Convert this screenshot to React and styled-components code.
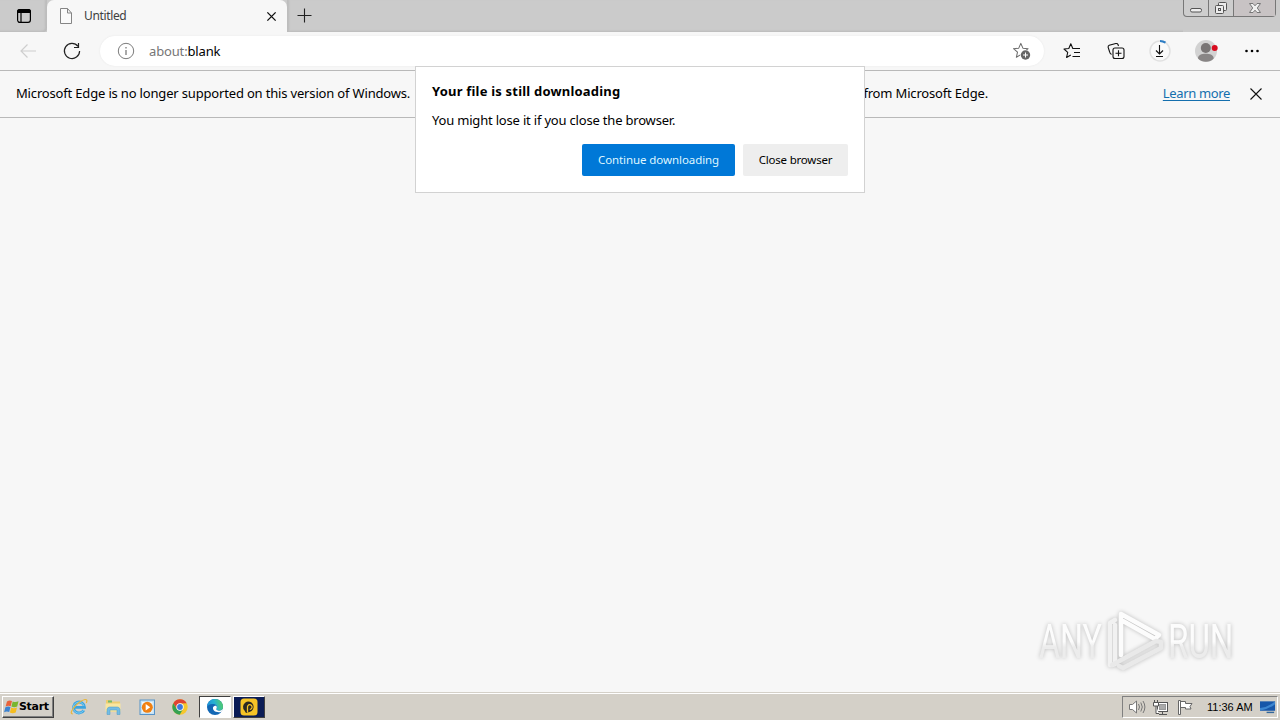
import React from "react";
import styled, { createGlobalStyle, css } from "styled-components";

const GlobalStyle = createGlobalStyle`
  * {
    box-sizing: border-box;
  }

  body {
    margin: 0;
    overflow: hidden;
    background: #f7f7f7;
  }

  svg {
    display: block;
    flex: none;
    overflow: visible;
  }
`;

const Screen = styled.div`
  display: flex;
  flex-direction: column;
  width: 1280px;
  height: 720px;
  overflow: hidden;
  background: #f7f7f7;
  font-family: "Noto Sans", "Open Sans", sans-serif;
  font-size: 13px;
  color: #000000;
`;

const Label = styled.span`
  white-space: nowrap;
  font-size: ${(p) => p.$size || 13}px;
  line-height: 18px;
  letter-spacing: ${(p) => p.$spacing || 0}px;
  color: ${(p) => p.$color || "inherit"};
`;

/* Tab strip */

const TabStrip = styled.div`
  display: flex;
  flex: none;
  height: 32px;
  background: #cbcbcb;
`;

const TabActions = styled.div`
  width: 47px;
  padding: 8px 0 0 16px;
  border-bottom-right-radius: 4px;
  box-shadow: inset -2px -1px 2px #bcbcbc;
`;

const Tab = styled.div`
  display: flex;
  width: 240px;
  padding: 0 11px 0 11px;
  align-items: center;
  border-radius: 7px 7px 0 0;
  background: #f7f7f7;
`;

const TabTitle = styled(Label)`
  flex: 1;
  padding-left: 10px;
`;

const NewTab = styled.div`
  flex: 1;
  padding: 8px 0 0 10px;
  box-shadow: inset 2px -1px 2px #bcbcbc;
`;

const WindowButtons = styled.div`
  display: flex;
  width: 93px;
  height: 17px;
  margin-right: 4px;
  border: 1px solid #777777;
  border-top: 0;
  border-radius: 0 0 4px 4px;
  background: #cdcdcd;
`;

const WindowButton = styled.div`
  display: flex;
  width: ${(p) => p.$width}px;
  align-items: center;
  justify-content: center;
  border-left: ${(p) => (p.$first ? "0" : "1px solid #777777")};
  background: ${(p) => (p.$close ? "#c8c3c4" : "transparent")};
`;

/* Toolbar */

const Toolbar = styled.div`
  display: flex;
  flex: none;
  height: 39px;
  padding-left: 19px;
  align-items: center;
  border-bottom: 1px solid #b9b9b9;
`;

const ToolbarItem = styled.div`
  display: flex;
  width: ${(p) => p.$width || 44}px;
  height: 38px;
  align-items: center;
  justify-content: center;
`;

const RefreshItem = styled(ToolbarItem)`
  margin-left: 13px;
`;

const AddressBar = styled.div`
  display: flex;
  width: 944px;
  height: 30px;
  margin: 0 6px;
  padding: 0 12px 0 17px;
  align-items: center;
  border-radius: 15px;
  background: #ffffff;
  box-shadow: 0 0 2px #e6e6e6;
`;

const Address = styled(Label)`
  flex: 1;
  padding-left: 14px;
`;

const Scheme = styled.span`
  color: #767676;
`;

/* Notification bar */

const InfoBar = styled.div`
  display: flex;
  flex: none;
  height: 47px;
  padding: 0 18px 2px 16px;
  align-items: center;
  border-bottom: 1px solid #b9b9b9;
`;

const InfoText = styled(Label)`
  width: 394px;
`;

const InfoTail = styled(Label)`
  width: 578px;
  text-align: right;
`;

const LearnMore = styled(Label)`
  margin-left: auto;
  margin-right: 20px;
  color: #146fae;
  text-decoration: underline;
  text-underline-offset: 2px;
`;

const DismissButton = styled.div`
  padding-top: 2px;
`;

const Content = styled.div`
  display: flex;
  flex: 1;
  align-items: flex-end;
  justify-content: flex-end;
  padding: 0 38px 14px 0;
`;

const WatermarkArt = styled.svg`
  filter: drop-shadow(0 0 2px rgba(0, 0, 0, 0.24));
`;

/* Dialog */

const Dialog = styled.div`
  position: absolute;
  left: 415px;
  top: 66px;
  display: flex;
  flex-direction: column;
  width: 450px;
  height: 127px;
  padding: 15px 16px;
  border: 1px solid #d2d2d2;
  background: #ffffff;
`;

const DialogTitle = styled(Label)`
  font-weight: 700;
  margin-bottom: 11px;
`;

const DialogButtons = styled.div`
  display: flex;
  justify-content: flex-end;
  gap: 8px;
  margin-top: 15px;
`;

const Button = styled.button`
  width: ${(p) => p.$width}px;
  height: 32px;
  padding: 0 0 1px;
  border: 0;
  border-radius: 2px;
  font-family: inherit;
  background: #eeeeee;
  color: #000000;

  ${(p) =>
    p.$primary &&
    css`
      background: #0078d7;
      color: #dff6ff;
    `}
`;

/* Taskbar */

const Taskbar = styled.div`
  display: flex;
  flex: none;
  height: 28px;
  padding: 2px 2px 1px;
  border-top: 1px solid #d4d0c8;
  background: #d4d0c8;
  box-shadow: inset 0 1px 0 #ffffff;
`;

const StartButton = styled.div`
  display: flex;
  width: 52px;
  height: 22px;
  margin: 1px 11px 0 0;
  padding-left: 1px;
  align-items: center;
  border: 1px solid;
  border-color: #ffffff #404040 #404040 #ffffff;
  box-shadow: inset -1px -1px 0 #808080;
  font-family: "DejaVu Sans", sans-serif;
  font-weight: 700;
`;

const TaskItem = styled.div`
  display: flex;
  width: ${(p) => p.$width || 34}px;
  height: 22px;
  margin-top: 1px;
  align-items: center;
  justify-content: center;

  ${(p) =>
    p.$active &&
    css`
      margin-right: 2px;
      border: 1px solid;
      border-color: #404040 #ffffff #ffffff #404040;
      background: #ffffff;
    `}

  ${(p) =>
    p.$dark &&
    css`
      border: 1px solid;
      border-color: #ffffff #404040 #404040 #ffffff;
      background: #0b1c55;
    `}
`;

const Tray = styled.div`
  display: flex;
  width: 156px;
  height: 22px;
  margin: 1px 0 0 auto;
  padding-left: 5px;
  align-items: center;
  gap: 7px;
  border: 1px solid;
  border-color: #808080 #ffffff #ffffff #808080;
  font-family: "Liberation Sans", sans-serif;
`;

const Clock = styled(Label)`
  margin-left: 6px;
  width: 46px;
`;

const TabActionsIcon = () => (
  <svg width="16" height="16" viewBox="0 0 16 16">
    <rect x="1.6" y="1.6" width="12.8" height="12.8" rx="2.3" fill="none" stroke="#000" strokeWidth="1.2" />
    <path d="M1 5V3.5Q1 1 3.5 1h9Q15 1 15 3.5V5Z" />
    <path d="M5 5v9.500" stroke="#000" strokeWidth="1.200" />
  </svg>
);

const PageIcon = () => (
  <svg width="16" height="18" viewBox="0 0 16 18" fill="#fafafa" stroke="#858585">
    <path d="M2.500 1.500h7l4 4.500v10.500h-11ZM9.500 1.500v4.500h4" />
  </svg>
);

const CloseIcon = ({ size, weight }) => (
  <svg width={size} height={size} viewBox="0 0 12 12" stroke="#111" strokeWidth={weight}>
    <path d="M.5.5l11 11M11.500.5l-11 11" />
  </svg>
);

const PlusIcon = () => (
  <svg width="16" height="16" viewBox="0 0 16 16" stroke="#222" strokeWidth="1.100">
    <path d="M7.500.5v14M.5 7.500h14" />
  </svg>
);

const BackIcon = () => (
  <svg width="18" height="16" viewBox="0 0 18 16" fill="none" stroke="#cecece" strokeWidth="1.200">
    <path d="M17 8H2M8.500 1.500L2 8l6.500 6.500" />
  </svg>
);

const RefreshIcon = () => (
  <svg width="18" height="18" viewBox="0 0 18 18" fill="none" stroke="#222" strokeWidth="1.200">
    <path d="M15 4.300A7.600 7.600 0 1 0 16.600 9M15.500 1v4.500H11" />
  </svg>
);

const InfoIcon = () => (
  <svg width="18" height="18" viewBox="0 0 18 18" fill="none" stroke="#7c7c7c">
    <circle cx="9" cy="9" r="7.700" />
    <path d="M9 8v5M9 5v1.500" strokeWidth="1.300" />
  </svg>
);

const STAR = "M8 1.500l2 4.600 5 .5-3.800 3.300 1.100 5L8 12.300l-4.300 2.600 1.100-5L1 6.600l5-.5Z";

const AddFavoriteIcon = () => (
  <svg width="20" height="20" viewBox="0 0 20 20">
    <path d={STAR} transform="translate(.5 .8) scale(1.040)" fill="none" stroke="#6b6b6b" strokeLinejoin="round" />
    <circle cx="13.500" cy="14" r="5.300" fill="#fff" />
    <circle cx="13.500" cy="14" r="4.700" fill="#666" />
    <path d="M13.500 11.500v5M11 14h5" stroke="#fff" />
  </svg>
);

const FavoritesIcon = () => (
  <svg width="18" height="18" viewBox="0 0 18 18" fill="none" stroke="#111" strokeWidth="1.100">
    <path d="M11 6.500H9.800L7.800 1.800 5.800 6.500 1 7l3.700 3.400-1.100 5.100 4.200-2.400" strokeLinejoin="round" />
    <path d="M11 6.500h6M11 10.500h6M9.500 14.500H17" />
  </svg>
);

const CollectionsIcon = () => (
  <svg width="18" height="18" viewBox="0 0 18 18" fill="none" stroke="#111" strokeWidth="1.100">
    <path d="M4.500 12.500Q2.800 11.500 2.500 9.500L1.100 5.200Q1 3.800 2.200 3.300l6.600-1.800Q10.500 1.200 11 2.500l.5 1.500" />
    <rect x="6" y="6" width="11" height="10.500" rx="2" />
    <path d="M11.500 8.200v6M8.500 11.200h6" />
  </svg>
);

const DownloadIcon = () => (
  <svg width="24" height="24" viewBox="0 0 24 24" fill="none">
    <circle cx="12" cy="12" r="10" fill="#fafafa" stroke="#e1e1e1" strokeWidth="1.500" />
    <path d="M12 2A10 10 0 0 1 17.500 3.700" stroke="#2b7cc4" strokeWidth="2" />
    <path d="M11.500 6v9M8 11.500l3.500 3.500 3.500-3.500M8 17.500h7" stroke="#111" strokeWidth="1.100" />
  </svg>
);

const ProfileIcon = () => (
  <svg width="24" height="24" viewBox="0 0 24 24">
    <circle cx="12" cy="12" r="11" fill="#d2d2d2" />
    <circle cx="11.800" cy="9" r="5" fill="#797575" />
    <path d="M4 19.500c0-3.500 3.500-4.700 7.800-4.700s7.900 1.200 7.900 4.700c-4 4.300-11.500 4.300-15.700 0Z" fill="#888585" />
    <circle cx="20.700" cy="9" r="3" fill="#d80b1f" />
  </svg>
);

const MoreIcon = () => (
  <svg width="16" height="4" viewBox="0 0 16 4">
    <circle cx="2.500" cy="2" r="1.300" />
    <circle cx="8" cy="2" r="1.300" />
    <circle cx="13.500" cy="2" r="1.300" />
  </svg>
);

const MinimizeIcon = () => (
  <svg width="14" height="16" viewBox="0 0 14 16" fill="#eee" stroke="#555">
    <rect x="1.500" y="8.500" width="11" height="3.500" rx="1.500" />
  </svg>
);

const RestoreIcon = () => (
  <svg width="14" height="16" viewBox="0 0 14 16" fill="#ececec" stroke="#555">
    <rect x="4.500" y="2.500" width="8" height="8" rx="1" />
    <rect x="1.500" y="5.500" width="8" height="8" rx="1" />
    <rect x="4.500" y="8.500" width="2" height="2" />
  </svg>
);

const WindowCloseIcon = () => (
  <svg width="14" height="16" viewBox="0 0 14 16" fill="#f0f0f0" stroke="#777">
    <path d="M1.500 3.500h3.500l2 2.300 2-2.300h3.500L9.300 8l3.200 4.500H9L7 10.200l-2 2.300H1.500L4.700 8Z" />
  </svg>
);

const WindowsFlag = () => (
  <svg width="15" height="16" viewBox="0 0 15 16">
    <path d="M3 2.500Q5.500.8 8 2L6.700 7.200Q4.200 6 1.600 7.500Z" fill="#e8623a" />
    <path d="M8.700 2.500q2.800 1.200 5.800-.2l-1.300 5.200q-2.900 1.500-5.800.1Z" fill="#79b62e" />
    <path d="M1.400 8.300q2.600-1.400 5.100-.2l-1.300 5Q2.700 12 .1 13.300Z" fill="#3b82d0" />
    <path d="M7.200 8.600q2.900 1.200 5.800-.2l-1.300 5.100q-2.900 1.400-5.800.1Z" fill="#f5bd20" />
  </svg>
);

const ExplorerIcon = () => (
  <svg width="18" height="18" viewBox="0 0 18 18" fill="none">
    <path d="M13.800 12.200A5.500 5.500 0 1 1 14.500 9.300H5" stroke="#3ba4e0" strokeWidth="2.800" />
    <path d="M13.800 11.800A5.500 5.500 0 1 1 14 8" stroke="#8ed7f6" strokeWidth=".8" />
    <path d="M2.800 16Q-.8 15.500 4 9.500 10 2.500 15 1.500q3-.2 1.300 3.500" stroke="#e8b63a" strokeWidth="1.200" />
  </svg>
);

const FolderIcon = () => (
  <svg width="18" height="18" viewBox="0 0 18 18">
    <path d="M2 2h5l1 1.500h8v10H2Z" fill="#edcd70" />
    <path d="M4 2.500h4v2H4Z" fill="#73b96d" />
    <path d="M1.500 5.500h15v8h-15Z" fill="#f8e6a0" />
    <path d="M3 16.500v-5Q3.500 9 5.500 9h8q2 0 2.500 2.500v5h-3v-4.500H6v4.500Z" fill="#73bce4" stroke="#4a99c7" strokeWidth=".5" />
  </svg>
);

const MediaIcon = () => (
  <svg width="17" height="17" viewBox="0 0 17 17">
    <rect x="1" y="1" width="14.500" height="14.500" fill="#c6e2f5" stroke="#5793c8" />
    <rect x="3" y="3" width="10.500" height="10.500" fill="#eef7fc" />
    <circle cx="8.300" cy="8.300" r="5.500" fill="#f08012" />
    <path d="M6.700 5v6.500l4.500-3.200Z" fill="#fff" />
  </svg>
);

const ChromeIcon = () => (
  <svg width="16" height="16" viewBox="0 0 16 16">
    <circle cx="8" cy="8" r="7.700" fill="#f6c72d" />
    <path d="M1.300 4.200A7.700 7.700 0 0 1 14.700 4.300L8 4.400 4.900 9.800Z" fill="#df4434" />
    <path d="M1.300 4.200L4.800 10 8 11.600l2.500-.5-2.800 4.600A7.700 7.700 0 0 1 1.300 4.200Z" fill="#35a153" />
    <circle cx="8" cy="8" r="3.700" fill="#fff" />
    <circle cx="8" cy="8" r="2.900" fill="#3c78df" />
  </svg>
);

const EdgeIcon = () => (
  <svg width="18" height="18" viewBox="0 0 18 18">
    <defs>
      <linearGradient id="edgeTop" x1="0" x2="1" y1=".6" y2="0.400">
        <stop offset="0" stopColor="#1c8fd8" />
        <stop offset=".5" stopColor="#27b2d2" />
        <stop offset="1" stopColor="#55cf63" />
      </linearGradient>
    </defs>
    <circle cx="9" cy="9" r="8" fill="#1267b4" />
    <path d="M1 9A8 8 0 0 1 17 9c0 3-2.500 4-5 3.500-2-.4-2-1.300-1.400-2.200C12 8 9.500 5.800 6.500 6 3.500 6.200 1.500 7.500 1 9Z" fill="url(#edgeTop)" />
    <path d="M7 9.500c-.5 3 2.500 5.500 8.300 4.500L17.500 11v-1c-1 2.500-3.500 3-5.500 2.500s-2-1.300-1.400-2.200c.5-1 .1-1.900-.6-2.500C8.500 7.800 7.300 8.300 7 9.500Z" fill="#fff" />
  </svg>
);

const BadgeAppIcon = () => (
  <svg width="18" height="18" viewBox="0 0 18 18">
    <rect x=".5" y=".5" width="17" height="17" rx="3.500" fill="#f7c426" />
    <path d="M4.500 12.500A5.300 5.300 0 1 1 9.500 14L6 15Z" fill="#2b2824" />
    <path d="M7.500 14.500V9.300A2.300 2.300 0 1 1 9.800 11.300" fill="none" stroke="#f7c426" strokeWidth="1.300" />
  </svg>
);

const VolumeIcon = () => (
  <svg width="18" height="16" viewBox="0 0 18 16" fill="#fff" stroke="#777">
    <path d="M1.500 5.500h3L8.500 2v12l-4-3.500h-3Z" />
    <path d="M10.500 5q2 3 0 6M12.800 3.500q3 4.500 0 9M15 2q3.800 6 0 12" fill="none" />
  </svg>
);

const NetworkIcon = () => (
  <svg width="17" height="17" viewBox="0 0 17 17" fill="#fff" stroke="#555">
    <rect x="4.500" y="3.500" width="10" height="9" />
    <rect x="6.500" y="5.500" width="6" height="5" fill="#aaa" stroke="#999" />
    <path d="M6 15.500h8M9.500 13v2" />
    <path d="M.5 3.500h5v3.500h-5ZM1.500 1v2.500M4.500 1v2.500M3 7v7.500h3" />
  </svg>
);

const FlagIcon = () => (
  <svg width="17" height="17" viewBox="0 0 17 17" fill="#fff" stroke="#666">
    <path d="M3.500 2.500h5v2h6.500l-2 3 1 2.500H8.500v-1.500h-5Z" />
    <path d="M1.500 1.500h2v14h-2Z" />
  </svg>
);

const DesktopIcon = () => (
  <svg width="16" height="16" viewBox="0 0 17 16">
    <rect x="0" y="2" width="16" height="10" fill="#1756a9" />
    <path d="M0 9Q9 8 16 2v3Q10 10 0 12Z" fill="#3d86d0" />
    <path d="M7 13h8v1.500H7Z" fill="#34679b" />
  </svg>
);

const Watermark = () => (
  <WatermarkArt width="206" height="76" viewBox="0 0 206 76">
    <defs>
      <linearGradient id="fade" x1="0" x2="0" y1="0" y2="1">
        <stop offset=".5" stopColor="#fcfcfc" />
        <stop offset=".6" stopColor="#ececec" />
      </linearGradient>
    </defs>
    <g fill="url(#fade)" fontFamily="Roboto, sans-serif" fontSize="48">
      <text transform="translate(3 56) scale(.67 1)">ANY</text>
      <text transform="translate(132 56) scale(.69 1)">RUN</text>
    </g>
    <g fill="none" strokeWidth="4.500" strokeLinecap="round" strokeLinejoin="round">
      <path d="M79 18l-5 3v42l5-1V23" stroke="#f1f1f1" />
      <path d="M85 53V12l38 21-4 4-32-18" stroke="#fcfcfc" />
      <path d="M76 63l44-24 5 1v6L87 66l-4-2" stroke="#e9e9e9" />
    </g>
  </WatermarkArt>
);

const App = () => {
  return (
    <Screen>
      <GlobalStyle />
      <TabStrip>
        <TabActions>
          <TabActionsIcon />
        </TabActions>
        <Tab>
          <PageIcon />
          <TabTitle $size={12} $spacing={-0.35} $color="#404040">
            Untitled
          </TabTitle>
          <CloseIcon size={9} weight={1.8} />
        </Tab>
        <NewTab>
          <PlusIcon />
        </NewTab>
        <WindowButtons>
          <WindowButton $width={24} $first>
            <MinimizeIcon />
          </WindowButton>
          <WindowButton $width={25}>
            <RestoreIcon />
          </WindowButton>
          <WindowButton $width={42} $close>
            <WindowCloseIcon />
          </WindowButton>
        </WindowButtons>
      </TabStrip>
      <Toolbar>
        <BackIcon />
        <RefreshItem>
          <RefreshIcon />
        </RefreshItem>
        <AddressBar>
          <InfoIcon />
          <Address $spacing={-0.15}>
            <Scheme>about:</Scheme>blank
          </Address>
          <AddFavoriteIcon />
        </AddressBar>
        <ToolbarItem>
          <FavoritesIcon />
        </ToolbarItem>
        <ToolbarItem>
          <CollectionsIcon />
        </ToolbarItem>
        <ToolbarItem>
          <DownloadIcon />
        </ToolbarItem>
        <ToolbarItem $width={48}>
          <ProfileIcon />
        </ToolbarItem>
        <ToolbarItem>
          <MoreIcon />
        </ToolbarItem>
      </Toolbar>
      <InfoBar>
        <InfoText $spacing={-0.17}>
          Microsoft Edge is no longer supported on this version of Windows.
        </InfoText>
        <InfoTail $spacing={-0.17}>from Microsoft Edge.</InfoTail>
        <LearnMore $spacing={-0.35}>Learn more</LearnMore>
        <DismissButton>
          <CloseIcon size={12} weight={1.1} />
        </DismissButton>
      </InfoBar>
      <Content>
        <Watermark />
      </Content>
      <Taskbar>
        <StartButton>
          <WindowsFlag />
          <Label $size={11} $spacing={-0.3}>
            Start
          </Label>
        </StartButton>
        <TaskItem $width={28}>
          <ExplorerIcon />
        </TaskItem>
        <TaskItem $width={40}>
          <FolderIcon />
        </TaskItem>
        <TaskItem $width={28}>
          <MediaIcon />
        </TaskItem>
        <TaskItem $width={38}>
          <ChromeIcon />
        </TaskItem>
        <TaskItem $width={32} $active>
          <EdgeIcon />
        </TaskItem>
        <TaskItem $width={32} $dark>
          <BadgeAppIcon />
        </TaskItem>
        <Tray>
          <VolumeIcon />
          <NetworkIcon />
          <FlagIcon />
          <Clock $size={11}>11:36 AM</Clock>
          <DesktopIcon />
        </Tray>
      </Taskbar>
      <Dialog>
        <DialogTitle $spacing={0.2}>Your file is still downloading</DialogTitle>
        <Label $spacing={-0.19}>You might lose it if you close the browser.</Label>
        <DialogButtons>
          <Button $width={153} $primary>
            <Label $size={11.5} $spacing={-0.08}>
              Continue downloading
            </Label>
          </Button>
          <Button $width={105}>
            <Label $size={11.5} $spacing={-0.2}>
              Close browser
            </Label>
          </Button>
        </DialogButtons>
      </Dialog>
    </Screen>
  );
};

export default App;
